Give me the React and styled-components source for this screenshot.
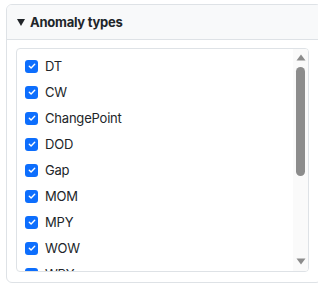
import React from 'react'
import styled, { createGlobalStyle } from 'styled-components'

const types = ['DT', 'CW', 'ChangePoint', 'DOD', 'Gap', 'MOM', 'MPY', 'WOW', 'WPY', 'YOY', 'QOQ', 'Spike']

const Global = createGlobalStyle`
    body{
        margin: 0;
        background: #fff;
        font-family: Inter, "Noto Sans", sans-serif;
        color: #212529;
        overflow: hidden;
    }
`

function App() {
    return (
        <Page>
            <Global />
            <Card>
                <Header>
                    <svg width="8" height="7" viewBox="0 0 8 7">
                        <path d="M0 0 H8 L4 7 Z" fill="#212529" />
                    </svg>
                    <Title>Anomaly types</Title>
                </Header>
                <Body>
                    <ListBox>
                        <Items>
                            {types.map(t => (
                                <Row key={t}>
                                    <Check>
                                        <svg width="8" height="8" viewBox="0 0 8 8">
                                            <path d="M1.3 4.2 L3.1 5.9 L6.7 2.2" fill="none" stroke="#fff" strokeWidth="1.4" strokeLinecap="round" strokeLinejoin="round" />
                                        </svg>
                                    </Check>
                                    <Label>{t}</Label>
                                </Row>
                            ))}
                        </Items>
                        <Scrollbar>
                            <ArrowBtn>
                                <svg width="10" height="7" viewBox="0 0 10 7">
                                    <path d="M0.5 6.5 L5 0.5 L9.5 6.5 Z" fill="#8c8c8c" />
                                </svg>
                            </ArrowBtn>
                            <Thumb />
                            <ArrowBtn $bottom>
                                <svg width="10" height="7" viewBox="0 0 10 7">
                                    <path d="M0.5 0.5 L5 6.5 L9.5 0.5 Z" fill="#8c8c8c" />
                                </svg>
                            </ArrowBtn>
                        </Scrollbar>
                    </ListBox>
                </Body>
            </Card>
        </Page>
    )
}

const Page = styled.div`
    padding: 4px 0 0 6px;
`

const Card = styled.div`
    width: 314px;
    border: 1px solid #dee2e6;
    border-radius: 6px;
    overflow: hidden;
`

const Header = styled.div`
    height: 34px;
    display: flex;
    align-items: center;
    gap: 5px;
    padding: 0 10px;
    background: #f8f9fa;
    border-bottom: 1px solid #dee2e6;
`

const Title = styled.span`
    font-size: 13px;
    font-weight: 700;
    letter-spacing: -0.25px;
`

const Body = styled.div`
    padding: 8px 9px 10px 9px;
`

const ListBox = styled.div`
    position: relative;
    width: 293px;
    height: 224px;
    border: 1px solid #dee2e6;
    border-radius: 4px;
    box-sizing: border-box;
    overflow: hidden;
`

const Items = styled.div`
    padding: 4px 0 0 8px;
`

const Row = styled.div`
    height: 26px;
    display: flex;
    align-items: center;
    gap: 7px;
`

const Check = styled.span`
    width: 13px;
    height: 13px;
    border-radius: 3px;
    background: #0d6efd;
    display: flex;
    align-items: center;
    justify-content: center;
    flex-shrink: 0;
`

const Label = styled.span`
    font-size: 13px;
    letter-spacing: -0.2px;
`

const Scrollbar = styled.div`
    position: absolute;
    top: 0;
    right: 0;
    bottom: 0;
    width: 15px;
    background: #fafafa;
    display: flex;
    flex-direction: column;
    align-items: center;
`

const ArrowBtn = styled.div`
    height: 15px;
    width: 15px;
    display: flex;
    justify-content: center;
    align-items: ${p => (p.$bottom ? 'flex-start' : 'flex-end')};
    padding: ${p => (p.$bottom ? '2px 0 0' : '0 0 3px')};
    box-sizing: border-box;
    margin-top: ${p => (p.$bottom ? 'auto' : '0')};
`

const Thumb = styled.div`
    width: 9px;
    height: 109px;
    margin-top: 3px;
    border-radius: 5px;
    background: #8c8c8c;
`

export default App
